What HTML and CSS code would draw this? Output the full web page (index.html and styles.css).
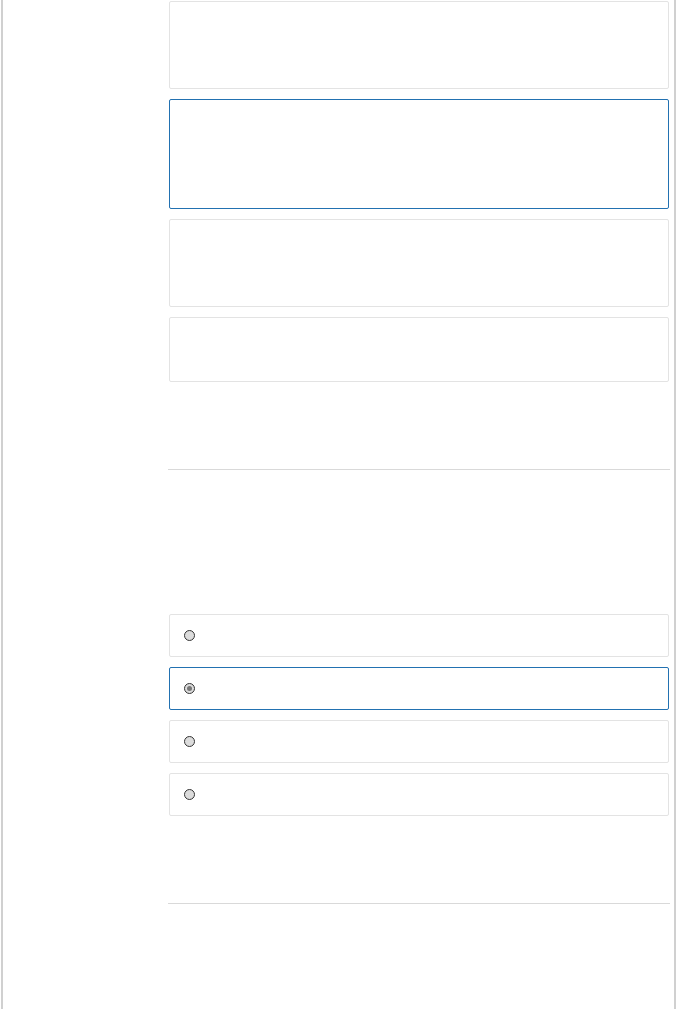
FILE: index.html
```html
<!DOCTYPE html>
<html lang="en">
<head>
    <meta charset="UTF-8">
    <meta name="viewport" content="width=device-width, initial-scale=1.0">
    <title>Form</title>
    <link rel="stylesheet" href="styles.css">
</head>
<body>
    <div class="page">
        <div class="fields">
            <div class="field tall"></div>
            <div class="field taller focused"></div>
            <div class="field tall"></div>
            <div class="field short"></div>
        </div>
        <div class="rule first"></div>
        <div class="choices">
            <label class="choice"><span class="radio"></span></label>
            <label class="choice focused"><span class="radio checked"></span></label>
            <label class="choice"><span class="radio"></span></label>
            <label class="choice"><span class="radio"></span></label>
        </div>
        <div class="rule second"></div>
    </div>
</body>
</html>
```
FILE: styles.css
```css
body {
    font-family: "Liberation Sans", Arial, sans-serif;
    margin: 0;
    background-color: #ffffff;
}
.page {
    box-sizing: border-box;
    margin-left: 1px;
    width: 675px;
    min-height: 1009px;
    border-left: 2px solid #d0d0d0;
    border-right: 2px solid #d0d0d0;
    padding: 1px 5px 0 166px;
}
.fields {
    display: flex;
    flex-direction: column;
    gap: 10px;
}
.field {
    box-sizing: border-box;
    width: 500px;
    border: 1px solid #e3e3e3;
    border-radius: 2px;
}
.field.tall {
    height: 88px;
}
.field.taller {
    height: 110px;
}
.field.short {
    height: 65px;
}
.focused {
    border-color: #2271b1 !important;
}
.rule {
    width: 502px;
    margin-left: -1px;
    height: 0;
    border-top: 1px solid #d9d9d9;
}
.rule.first {
    margin-top: 87px;
}
.choices {
    margin-top: 144px;
    display: flex;
    flex-direction: column;
    gap: 10px;
}
.choice {
    box-sizing: border-box;
    width: 500px;
    height: 43px;
    border: 1px solid #e3e3e3;
    border-radius: 2px;
    display: flex;
    align-items: center;
    padding-left: 14px;
}
.radio {
    box-sizing: border-box;
    width: 11px;
    height: 11px;
    border-radius: 50%;
    border: 1px solid #333;
    background-color: #dcdcdc;
    display: flex;
    align-items: center;
    justify-content: center;
}
.radio.checked::after {
    content: "";
    width: 5px;
    height: 5px;
    border-radius: 50%;
    background-color: #777;
}
.rule.second {
    margin-top: 87px;
}
```
